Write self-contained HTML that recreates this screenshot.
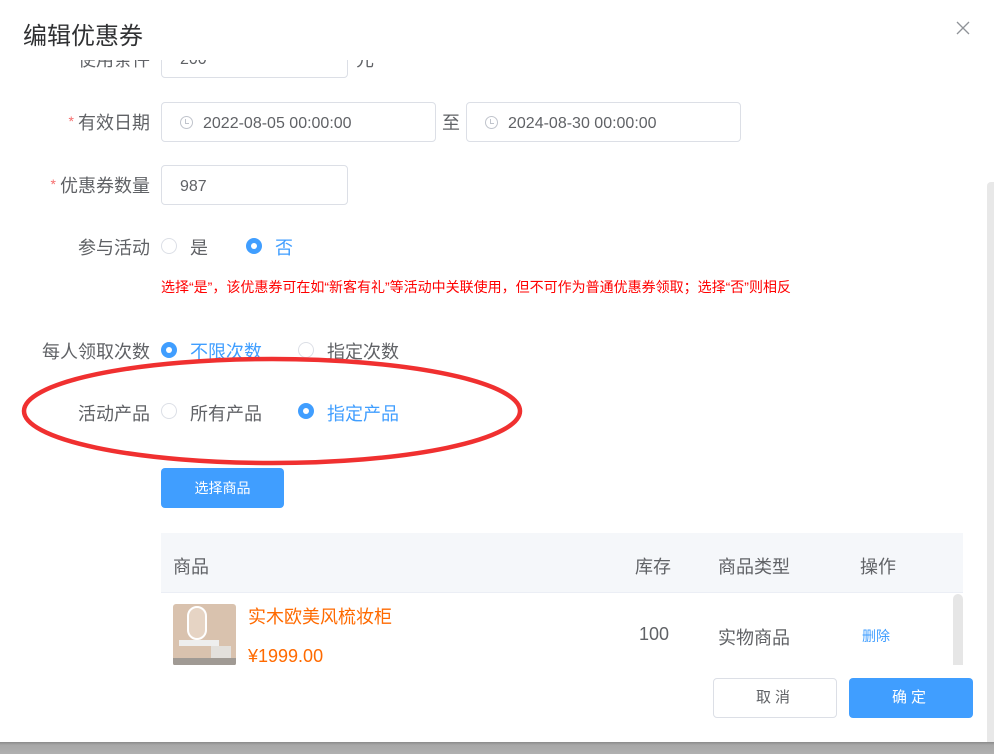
<!DOCTYPE html>
<html><head><meta charset="utf-8"><style>
*{margin:0;padding:0;box-sizing:border-box}
body{width:994px;height:754px;overflow:hidden;background:#fff;font-family:"Liberation Sans","Noto Sans CJK SC",sans-serif;color:#606266;position:relative}
.a{position:absolute}
.title{left:23px;top:16px;font-size:24px;color:#303133}
.close{left:955px;top:20px}
.clip{left:0;top:60px;width:994px;height:605px;overflow:hidden}
.lbl{font-size:18px;color:#606266;text-align:right;width:150px;left:0}
.star{color:#f56c6c;font-size:14px;margin-right:4px;vertical-align:3px}
.inp{border:1px solid #dcdfe6;border-radius:4px;background:#fff;font-size:16px;color:#606266;padding-left:18px;padding-top:2px;line-height:38px;height:40px}
.clk{display:inline-block;width:13px;height:13px;border:1.5px solid #c0c4cc;border-radius:50%;margin-right:10px;vertical-align:-1px;position:relative}
.clk:after{content:"";position:absolute;left:4px;top:2px;width:3px;height:4px;border-left:1.5px solid #c0c4cc;border-bottom:1.5px solid #c0c4cc}
.r{width:16px;height:16px;border:1px solid #dcdfe6;border-radius:50%;background:#fff}
.rc{width:16px;height:16px;border-radius:50%;background:#409eff}
.rc:after{content:"";position:absolute;left:5px;top:5px;width:6px;height:6px;border-radius:50%;background:#fff}
.t{font-size:18px}
.blue{color:#409eff}
</style></head><body>
<div class="a title">编辑优惠券</div>
<svg class="a close" width="16" height="16" viewBox="0 0 16 16"><path d="M2 2L14 14M14 2L2 14" stroke="#909399" stroke-width="1.3"/></svg>
<div class="a clip">
 <div class="a lbl" style="top:-14px;">使用条件</div>
 <div class="a inp" style="left:161px;top:-22px;width:187px;">200</div>
 <div class="a t" style="left:356px;top:-14px;">元</div>

 <div class="a lbl" style="top:49px;"><span class="star">*</span>有效日期</div>
 <div class="a inp" style="left:161px;top:42px;width:275px;"><span class="clk"></span>2022-08-05 00:00:00</div>
 <div class="a t" style="left:442px;top:49px;">至</div>
 <div class="a inp" style="left:466px;top:42px;width:275px;"><span class="clk"></span>2024-08-30 00:00:00</div>

 <div class="a lbl" style="top:112px;"><span class="star">*</span>优惠券数量</div>
 <div class="a inp" style="left:161px;top:105px;width:187px;">987</div>

 <div class="a lbl" style="top:174px;">参与活动</div>
 <div class="a r" style="left:161px;top:178px;"></div><div class="a t" style="left:190px;top:174px;">是</div>
 <div class="a rc" style="left:246px;top:178px;"></div><div class="a t blue" style="left:275px;top:174px;">否</div>
 <div class="a" style="left:161px;top:217px;font-size:14px;color:#f00;">选择“是”，该优惠券可在如“新客有礼”等活动中关联使用，但不可作为普通优惠券领取；选择“否”则相反</div>

 <div class="a lbl" style="top:278px;">每人领取次数</div>
 <div class="a rc" style="left:161px;top:282px;"></div><div class="a t blue" style="left:190px;top:278px;">不限次数</div>
 <div class="a r" style="left:298px;top:282px;"></div><div class="a t" style="left:327px;top:278px;">指定次数</div>

 <div class="a lbl" style="top:340px;">活动产品</div>
 <div class="a r" style="left:161px;top:343px;"></div><div class="a t" style="left:190px;top:340px;">所有产品</div>
 <div class="a rc" style="left:298px;top:343px;"></div><div class="a t blue" style="left:327px;top:340px;">指定产品</div>

 <div class="a" style="left:161px;top:408px;width:123px;height:40px;background:#409eff;border-radius:4px;color:#fff;font-size:14px;text-align:center;line-height:40px;">选择商品</div>

 <div class="a" style="left:161px;top:473px;width:802px;height:60px;background:#f5f7fa;border-bottom:1px solid #ebeef5;"></div>
 <div class="a t" style="left:173px;top:493px;">商品</div>
 <div class="a t" style="left:635px;top:493px;">库存</div>
 <div class="a t" style="left:718px;top:493px;">商品类型</div>
 <div class="a t" style="left:860px;top:493px;">操作</div>
 <div class="a" style="left:173px;top:544px;width:63px;height:62px;background:#d9c2ae;border-radius:3px;overflow:hidden;">
  <div class="a" style="left:14px;top:2px;width:20px;height:34px;border:2px solid #fff;border-radius:10px;background:#e6d4c4"></div>
  <div class="a" style="left:6px;top:36px;width:40px;height:6px;background:#eee;"></div>
  <div class="a" style="left:38px;top:42px;width:20px;height:18px;background:#e3e0dc;"></div>
  <div class="a" style="left:0;top:54px;width:63px;height:8px;background:#a09a94;"></div>
 </div>
 <div class="a t" style="left:248px;top:543px;color:#ff6a00;">实木欧美风梳妆柜</div>
 <div class="a t" style="left:248px;top:586px;color:#ff6a00;">¥1999.00</div>
 <div class="a t" style="left:639px;top:564px;">100</div>
 <div class="a t" style="left:718px;top:564px;">实物商品</div>
 <div class="a blue" style="left:862px;top:566px;font-size:14px;">删除</div>
 <div class="a" style="left:953px;top:534px;width:10px;height:80px;background:#e6e6e6;border-radius:5px;"></div>
</div>
<div class="a" style="left:987px;top:182px;width:7px;height:560px;background:#e8e8e8;border-radius:4px 0 0 0;"></div>
<div class="a" style="left:713px;top:678px;width:124px;height:40px;border:1px solid #dcdfe6;border-radius:4px;font-size:15px;text-align:center;line-height:38px;letter-spacing:4px;">取消</div>
<div class="a" style="left:849px;top:678px;width:124px;height:40px;background:#409eff;border-radius:4px;font-size:15px;color:#fff;text-align:center;line-height:40px;letter-spacing:4px;">确定</div>
<div class="a" style="left:0;top:742px;width:994px;height:12px;background:linear-gradient(#8a8a8a,#a8a8a8 3px,#b0b0b0);"></div>
<svg class="a" style="left:0;top:0" width="994" height="754"><ellipse cx="272" cy="411" rx="248" ry="52" fill="none" stroke="#f03030" stroke-width="4.5"/></svg>
</body></html>
